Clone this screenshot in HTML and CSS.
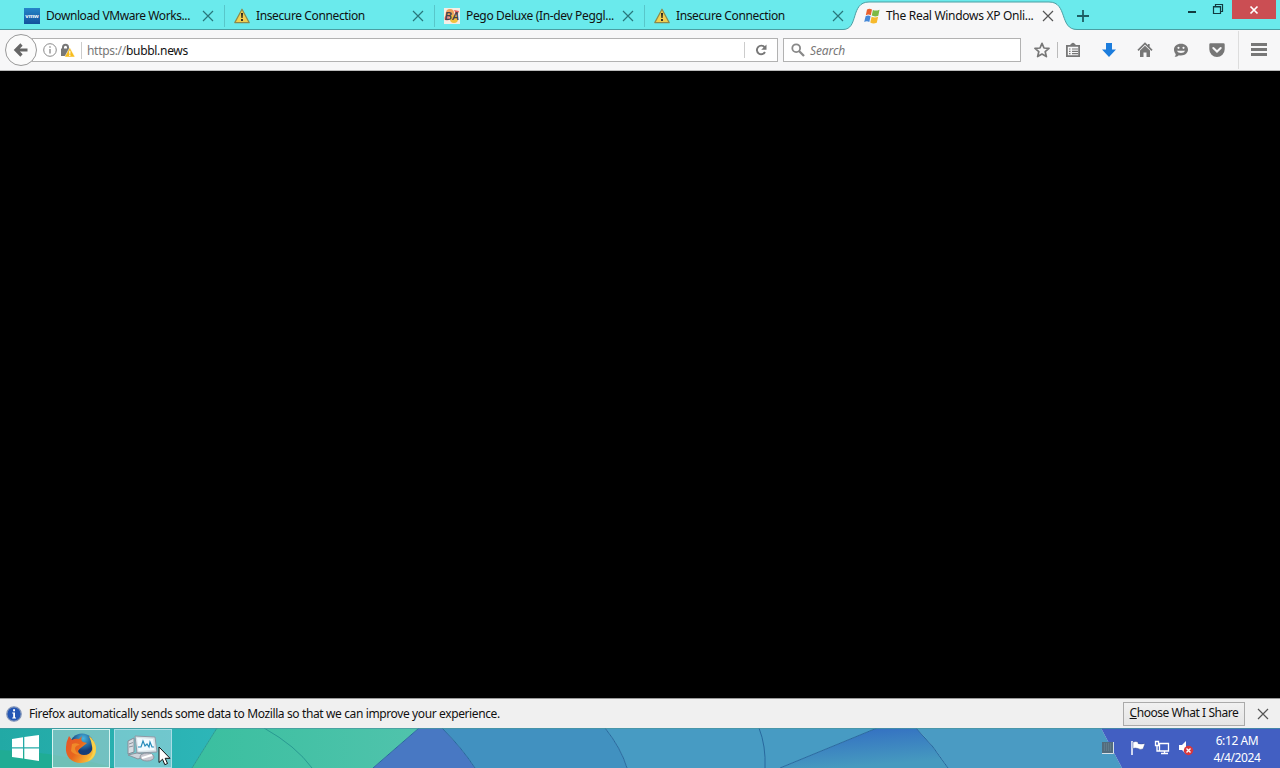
FILE: index.html
```html
<!DOCTYPE html>
<html lang="en">
<head>
    <meta charset="UTF-8">
    <title>The Real Windows XP Online</title>
    <link rel="stylesheet" href="styles.css">
</head>
<body>
    <svg class="defs" width="0" height="0">
        <symbol id="cross" viewBox="0 0 12 12"><path d="M1 1L11 11M11 1L1 11" fill="none" stroke="currentColor" stroke-width="1.2"/></symbol>
        <symbol id="warning" viewBox="0 0 16 16">
            <path d="M8 1.2L15.2 14.6H.8Z" fill="#f0cf50" stroke="#8c8a4c" stroke-width="1.2" stroke-linejoin="round"/>
            <path d="M7 5h2l-.4 5H7.4zM7.1 11h1.8v2H7.1z" fill="#222"/>
        </symbol>
    </svg>
    <div id="desktop">
        <div id="tabs">
            <div class="tab">
                <svg class="favicon" viewBox="0 0 16 16"><defs><linearGradient id="vm" x2="0" y2="1"><stop stop-color="#2585c8"/><stop offset="1" stop-color="#12519c"/></linearGradient></defs><path d="M0 0h16v16H0z" fill="url(#vm)"/><text x="8" y="10" text-anchor="middle" class="vmw">vmw</text></svg>
                <span class="title t1">Download VMware Works...</span>
                <svg class="close"><use href="#cross"/></svg>
            </div>
            <div class="tab">
                <svg class="favicon"><use href="#warning"/></svg>
                <span class="title t2">Insecure Connection</span>
                <svg class="close"><use href="#cross"/></svg>
            </div>
            <div class="tab">
                <svg class="favicon" viewBox="0 0 16 16"><path d="M0 0h16v16H0z" fill="#f5eee6"/><circle cx="6" cy="5" r="4" fill="#f0a05a"/><circle cx="10" cy="11" r="4" fill="#f5c23c"/><circle cx="3" cy="10" r="2.5" fill="#e88"/><path d="M10 2l5 1-2 5z" fill="#e4605a"/><text x="8" y="12" text-anchor="middle" class="ba">BA</text></svg>
                <span class="title t3">Pego Deluxe (In-dev Peggl...</span>
                <svg class="close"><use href="#cross"/></svg>
            </div>
            <div class="tab last">
                <svg class="favicon"><use href="#warning"/></svg>
                <span class="title t2">Insecure Connection</span>
                <svg class="close"><use href="#cross"/></svg>
            </div>
            <div class="tab active">
                <svg class="shape" viewBox="0 0 240 31"><path d="M0 29.5C16 29.5 7 2 26 2H206C225 2 216 29.500 234 29.500V31H0Z" fill="#f7f7f8"/><path d="M0 29.5C16 29.5 7 2 26 2H206C225 2 216 29.500 234 29.500" fill="none" stroke="#4a9fa3"/></svg>
                <svg class="favicon" viewBox="0 0 16 16"><path d="M3 1.5C5 .3 6 .5 8 1.4L6.8 7.2C5 6.3 3.6 6.4 1.8 7.3Z" fill="#e8602c"/><path d="M8.9 1.9c2 1 4 .9 6.6-.2l-1.2 6c-2.4 1-4.4.9-6.5-.1Z" fill="#7db944"/><path d="M1.6 8.3c1.8-1 3.2-1 5-.1L5.3 14C3.6 13 2 13 .2 14Z" fill="#4488d8"/><path d="M7.6 8.7c2.1 1 4 1.1 6.5.1l-1.3 6c-2.6 1-4.5.9-6.5-.2Z" fill="#f6b92c"/></svg>
                <span class="title t4">The Real Windows XP Onli...</span>
                <svg class="close"><use href="#cross"/></svg>
            </div>
            <svg class="plus" viewBox="0 0 12 12"><path d="M6 0v12M0 6h12" stroke="#1d5e63" stroke-width="1.8"/></svg>
            <div class="window-buttons">
                <svg width="44" height="19" viewBox="0 0 44 19"><path d="M0 11h8v2H0z" fill="#123b40"/><path d="M25.5 6.500h7v7h-7zM27.500 6V4.500h7v7H33M25 7h8" fill="none" stroke="#123b40" stroke-width="1.2"/></svg>
                <div class="window-close"><svg viewBox="0 0 12 12"><path d="M2.500 2.500l7 7m0-7l-7 7" stroke="#fff" stroke-width="1.7"/></svg></div>
            </div>
        </div>
        <div id="toolbar">
            <div class="back"><svg viewBox="0 0 16 16"><path d="M14.500 8H3M8.500 2.500L3 8l5.500 5.500" fill="none" stroke="#666" stroke-width="3.200"/></svg></div>
            <div class="urlbar">
                <svg class="info" viewBox="0 0 14 14"><circle cx="7" cy="7" r="6.300" fill="none" stroke="#8b8b8b"/><path d="M7 6v4.500M7 3.300v1.500" stroke="#888" stroke-width="1.300"/></svg>
                <svg class="lock" viewBox="0 0 15 15"><path d="M3 7V4.200a2.500 2.500 0 0 1 5 0V7" fill="none" stroke="#777" stroke-width="2"/><path d="M1 5.500h9v7.500H1z" fill="#777"/><path d="M9.800 4.500L15 14H4.600Z" fill="#f8bd1c" stroke="#fff" stroke-width=".5"/><path d="M9.800 7.800v3m0 .8v1.300" stroke="#fff" stroke-width="1.200"/></svg>
                <span class="address"><span class="scheme">https://</span>bubbl.news</span>
                <div class="reload"><svg viewBox="0 0 12 12"><path d="M9.500 3.200A4.300 4.300 0 1 0 10 8" fill="none" stroke="#777" stroke-width="1.900"/><path d="M11.500.5v5.300H6.200z" fill="#777"/></svg></div>
            </div>
            <div class="search">
                <svg viewBox="0 0 14 14"><circle cx="5.200" cy="5.200" r="3.900" fill="none" stroke="#888" stroke-width="1.800"/><path d="M8 8l5 5" stroke="#888" stroke-width="2.300"/></svg>
                <span>Search</span>
            </div>
            <div class="tool star"><svg viewBox="0 0 16 16"><path d="M8 1.300l2 4.700 5 .4-3.800 3.300 1.200 4.900L8 12l-4.400 2.600 1.200-4.900L1 6.400 6 6z" fill="none" stroke="#777" stroke-width="1.700" stroke-linejoin="round"/></svg></div>
            <div class="tool list"><svg viewBox="0 0 16 16"><path d="M1.900 3.800h12.200v10.400H1.900z" fill="none" stroke="#777" stroke-width="1.800" /><path d="M5 3l1.500-1.400Q8-.2 9.500 1.600L11 3z" fill="#777"/><path d="M4 7h1.500M7 7h6M4 9.300h1.500M7 9.300h6M4 11.600h1.500M7 11.600h6" stroke="#777" stroke-width="1.200"/></svg></div>
            <div class="tool"><svg viewBox="0 0 16 16"><path d="M5 1h6v6.500h4L8 15 1 7.500h4z" fill="#1c7ddd"/></svg></div>
            <div class="tool"><svg viewBox="0 0 16 16"><path d="M1 8.300L8 1.500l7 6.800M11.800 2v3.500" fill="none" stroke="#777" stroke-width="1.700"/><path d="M3 8.500l5-4.800 5 4.800V15H9.500v-4.500h-3V15H3z" fill="#777"/></svg></div>
            <div class="tool"><svg viewBox="0 0 16 16"><path d="M8 1.800c4.200 0 7 2.500 7 5.800s-2.800 5.900-7 5.900c-.8 0-1.500-.1-2.200-.3-1.100 1-2.500 1.700-4.300 1.600.9-.9 1.300-1.700 1.200-2.900C1.500 10.800 1 9.300 1 7.600c0-3.300 2.800-5.800 7-5.800z" fill="#777"/><circle cx="5.500" cy="5.800" r="1.100" fill="#f7f7f8"/><circle cx="10.500" cy="5.800" r="1.100" fill="#f7f7f8"/><path d="M3.800 8.700h8.400q-1.200 2.300-4.200 2.300t-4.200-2.300z" fill="#f7f7f8"/></svg></div>
            <div class="tool"><svg viewBox="0 0 16 16"><path d="M1.500 1.300h13q1.200 0 1.200 1.200v4.700a7.700 7.700 0 0 1-15.400 0V2.500q0-1.200 1.200-1.200z" fill="#777"/><path d="M4.300 6L8 9.500 11.700 6" fill="none" stroke="#f7f7f8" stroke-width="2" stroke-linecap="round"/></svg></div>
            <div class="tool menu"><svg viewBox="0 0 16 16"><path d="M0 2.500h16M0 7.500h16M0 12.500h16" stroke="#777" stroke-width="2.800"/></svg></div>
        </div>
        <div id="page"></div>
        <div id="infobar">
            <svg class="info-icon" viewBox="0 0 16 16"><circle cx="8" cy="8" r="7.200" fill="#2456b4" stroke="#8295b8" stroke-width="1.300"/><path d="M6.200 6.500H9v5h1v1H6.200v-1h1v-4h-1zM7.100 3.200H9v2H7.100z" fill="#fff"/></svg>
            <span class="message">Firefox automatically sends some data to Mozilla so that we can improve your experience.</span>
            <div class="choose"><span><u>C</u>hoose What I Share</span></div>
            <svg class="close"><use href="#cross"/></svg>
        </div>
        <div id="taskbar">
            <svg class="wallpaper" viewBox="0 0 1280 40">
                <defs>
                    <linearGradient id="teal"><stop stop-color="#22a9a5"/><stop offset="1" stop-color="#2db6b8"/></linearGradient>
                    <linearGradient id="green"><stop stop-color="#3abf9f"/><stop offset="1" stop-color="#50c3ac"/></linearGradient>
                    <linearGradient id="fold" x2=".3" y2="1"><stop stop-color="#316ac3"/><stop offset="1" stop-color="#469abf"/></linearGradient>
                </defs>
                <path d="M0 0h217l-25 40H0z" fill="url(#teal)"/>
                <path d="M0 22Q60 24 115 40H0z" fill="#20ac94"/>
                <path d="M217 0h202l-46 40H192z" fill="url(#green)"/>
                <path d="M419 0h23q20 20 33 40H373z" fill="#4878c3"/>
                <path d="M442 0h163q16 20 22 40H475Q462 20 442 0z" fill="#4191c0"/>
                <path d="M605 0h272L780 40H627Q621 20 605 0z" fill="#479bc3"/>
                <path d="M877 0h39q18 18 32 40H780z" fill="url(#fold)"/>
                <path d="M916 0h185l21 40H948Q934 18 916 0z" fill="#4a9bc3"/>
                <path d="M1101 0h179v40H1122z" fill="#425fc2"/>
                <path d="M217 0l-25 40M264 0q32 18 48 40" fill="none" stroke="#299a92"/>
                <path d="M419 0l-46 40M442 0q20 20 33 40M605 0q16 20 22 40M759 0q7 18 6 40M877 0L780 40M916 0q18 18 32 40" fill="none" stroke="#28699e"/>
                <path d="M0 .5h1280" stroke="#4a969e" stroke-opacity=".7"/>
            </svg>
            <div class="start"><svg viewBox="0 0 27 26"><path d="M0 4l11-1.700v10H0zM12.300 2L27 0v12.300H12.300zM0 13.500h11v10L0 22zM12.300 13.500H27V26l-14.700-2.200z" fill="#fff"/></svg></div>
            <div class="task">
                <svg viewBox="0 0 32 32">
                    <defs><radialGradient id="globe" cx=".55" cy=".2"><stop stop-color="#47b5df"/><stop offset="1" stop-color="#143c78"/></radialGradient><linearGradient id="fox" x2="1" y2=".6"><stop stop-color="#e5532b"/><stop offset=".5" stop-color="#e8661d"/><stop offset="1" stop-color="#f8c338"/></linearGradient></defs>
                    <circle cx="17" cy="14" r="12.500" fill="url(#globe)"/>
                    <path d="M4 4l3 4q3-2 7-1l3-3q-2 4 1 6l4 1-5 4q-3 2-4 4 1 4 6 4 6 0 8-5 2-7-3-14 6 5 7 12 0 14-15 15C6 31 0 24 1 15q0-5 3-11z" fill="url(#fox)"/>
                    <path d="M24 4q6 5 7 12 0 10-8 13 7-7 4-15-1-6-3-10z" fill="#f8d24b"/>
                    <path d="M7 12q5-2 8 1-4 0-5 3 0 5 6 7-7 0-10-4z" fill="#f08a29"/>
                </svg>
            </div>
            <div class="task hover">
                <svg viewBox="0 0 32 32">
                    <path d="M1 9l6-3v14l-6 2z" fill="#d8dde2" stroke="#858c98"/><path d="M2 12l4-1.500M2 15l4-1" stroke="#88929d"/>
                    <path d="M8 4l20 1 2 15-20 1z" fill="#d9e3e8" stroke="#8e9aa6"/><path d="M10 6l16 1 1.500 11-16 1z" fill="#f2fbff"/>
                    <path d="M11 15h3l2-6 2 5 2-2 2 3 1-5 2 5h2" fill="none" stroke="#258bba" stroke-width="1.200"/>
                    <path d="M1 23l9-2 10 2-9 4z" fill="#ccd3da" stroke="#89939c"/><ellipse cx="20" cy="25" rx="7" ry="4" fill="#c8c8d0" stroke="#9096a0"/><path d="M15 26l10-3" stroke="#fff" stroke-width="2"/>
                </svg>
            </div>
            <div class="tray">
                <svg class="grid" viewBox="0 0 12 12"><path d="M0 0h12v12H0z" fill="#536c7d"/><path d="M0 11.500h11.500V0" fill="none" stroke="#d6e1e9"/><path d="M2 2h8M2 4h8M2 6h8M2 8h8" stroke="#6e899a" stroke-dasharray="1 1"/></svg>
                <svg class="flag" viewBox="0 0 16 16"><path d="M2 1v14" stroke="#fff" stroke-width="1.500"/><path d="M3 2q3-1 5 0v1.500q3 1 7 0L13 9q-3 1-5-.5Q5 7.500 3 8.500z" fill="#fff" stroke="#253c84" stroke-width=".4"/></svg>
                <svg class="network" viewBox="0 0 16 16"><path d="M5.500 3.500h9v7.500h-9zM7 13.500h7M10.500 11v3M1.500 1.500h3v4h-3zM3 5.500V11h2" fill="none" stroke="#fff" stroke-width="1.300"/></svg>
                <svg class="sound" viewBox="0 0 16 16"><path d="M1 5h3l4-4v13l-4-4H1z" fill="#fff"/><circle cx="10.500" cy="10.500" r="4.700" fill="#d8373d"/><path d="M8.500 8.500l4 4m0-4l-4 4" stroke="#fff" stroke-width="1.400"/></svg>
                <div class="clock"><span class="time">6:12 AM</span><span class="date">4/4/2024</span></div>
            </div>
            <svg class="pointer" viewBox="0 0 13 20"><path d="M1 1v15.500l3.500-3.300 2.300 5.500 2.700-1.200-2.300-5.200h4.800z" fill="#fff" stroke="#111"/></svg>
        </div>
    </div>
</body>
</html>
```

FILE: styles.css
```css
body{
    margin:0;
    font-family: "Noto Sans", "Open Sans", sans-serif;
    font-size:12px;
    color:#111;
    overflow:hidden;
}
svg{
    display:block;
    flex:none;
}
span{
    white-space:nowrap;
}
.defs{
    position:absolute;
}
#desktop{
    display:flex;
    flex-direction:column;
    width:1280px;
    height:768px;
}
/* tab strip */
#tabs{
    display:flex;
    height:30px;
    box-sizing:border-box;
    padding-left:14px;
    background:#6aeaec;
    border-bottom:1px solid #4a9fa3;
}
.tab{
    display:flex;
    align-items:center;
    position:relative;
    width:210px;
    height:32px;
    box-sizing:border-box;
    padding:0 10px;
}
.tab::after{
    content:"";
    position:absolute;
    right:-1px;
    top:5px;
    width:1px;
    height:22px;
    background:#58c6ca;
}
.tab.last::after, .tab.active::after{
    display:none;
}
.favicon{
    width:16px;
    height:16px;
    margin-right:6px;
    position:relative;
}
.vmw{
    font-family:"Liberation Sans", sans-serif;
    font-size:6px;
    font-weight:bold;
    fill:#fff;
}
.ba{
    font-family:"Liberation Sans", sans-serif;
    font-size:10px;
    font-weight:bold;
    font-style:italic;
    fill:#43434d;
}
.title{
    flex:1;
    width:0;
    position:relative;
    line-height:16px;
    padding-bottom:1px;
}
.t1{letter-spacing:-.42px;}
.t2{letter-spacing:-.38px;}
.t3{letter-spacing:-.34px;}
.t4{letter-spacing:-.3px;}
.close{
    width:12px;
    height:12px;
    color:#28777b;
    position:relative;
}
.active .close, #infobar .close{
    color:#555;
}
.shape{
    position:absolute;
    left:-11px;
    top:0;
    width:240px;
    height:31px;
}
.plus{
    width:12px;
    height:12px;
    margin:10px 0 0 13px;
}
.window-buttons{
    display:flex;
    margin-left:auto;
    margin-right:4px;
}
.window-close{
    display:flex;
    align-items:center;
    justify-content:center;
    width:44px;
    height:19px;
    background:#cb4e53;
}
.window-close svg{
    width:12px;
    height:12px;
}
/* navigation */
#toolbar{
    display:flex;
    align-items:center;
    height:41px;
    box-sizing:border-box;
    border-bottom:1px solid #bbb;
    background:#f7f7f8;
    padding-left:5px;
}
.back{
    display:flex;
    align-items:center;
    justify-content:center;
    width:32px;
    height:32px;
    box-sizing:border-box;
    border:1px solid #999;
    border-radius:50%;
    background:#fbfbfb;
    position:relative;
    z-index:1;
}
.back svg{
    width:16px;
    height:16px;
}
.urlbar{
    display:flex;
    align-items:center;
    width:746px;
    height:24px;
    box-sizing:border-box;
    margin-left:-5px;
    border:1px solid #b2b2b2;
    background:#fff;
    padding-left:10px;
}
.info{
    width:14px;
    height:14px;
}
.lock{
    width:15px;
    height:15px;
    margin-left:3px;
}
.address{
    flex:1;
    margin-left:6px;
    padding-left:5px;
    border-left:1px solid #ccc;
    letter-spacing:-.3px;
}
.scheme{
    color:#777;
}
.reload{
    display:flex;
    align-items:center;
    justify-content:center;
    width:32px;
    height:16px;
    border-left:1px solid #ccc;
}
.reload svg{
    width:12px;
    height:12px;
}
.search{
    display:flex;
    align-items:center;
    width:238px;
    height:24px;
    box-sizing:border-box;
    margin:0 6px 0 5px;
    border:1px solid #b2b2b2;
    background:#fff;
    padding-left:7px;
    color:#777;
    font-style:italic;
    letter-spacing:-.1px;
}
.search svg{
    width:14px;
    height:14px;
    margin-right:5px;
}
.tool{
    display:flex;
    align-items:center;
    justify-content:center;
    width:36px;
}
.tool svg{
    width:16px;
    height:16px;
}
.star{
    width:30px;
    border-right:1px solid #bbb;
}
.list{
    width:30px;
    margin-right:3px;
}
.menu{
    width:40px;
    height:38px;
    margin-left:3px;
    border-left:1px solid #ddd;
}
#page{
    flex:1;
    background:#000;
}
#infobar{
    display:flex;
    align-items:center;
    height:30px;
    box-sizing:border-box;
    border-top:1px solid #999;
    background:#f0f0f0;
    padding:0 11px 0 6px;
}
.info-icon{
    width:16px;
    height:16px;
    margin-right:7px;
}
.message{
    letter-spacing:-.38px;
    padding-bottom:1px;
}
.choose{
    display:flex;
    align-items:center;
    justify-content:center;
    width:122px;
    height:24px;
    box-sizing:border-box;
    margin:0 12px 0 auto;
    padding-bottom:2px;
    border:1px solid #aaa;
    background:linear-gradient(#f1f1f1,#e5e5e5);
    letter-spacing:-.45px;
}
/* windows taskbar */
#taskbar{
    display:flex;
    align-items:center;
    position:relative;
    height:40px;
}
.wallpaper{
    position:absolute;
    left:0;
    top:0;
    width:1280px;
    height:40px;
}
.start{
    width:27px;
    margin:0 13px 0 12px;
    position:relative;
}
.task{
    display:flex;
    align-items:center;
    justify-content:center;
    width:58px;
    height:39px;
    box-sizing:border-box;
    margin-right:4px;
    border:1px solid #d5f3f0;
    background:rgba(165,205,205,.6);
    position:relative;
}
.task svg{
    width:32px;
    height:32px;
}
.hover{
    border-color:#a9dce5;
    background:rgba(150,210,220,.65);
}
.tray{
    display:flex;
    align-items:center;
    margin-left:auto;
    position:relative;
    color:#fff;
}
.grid{
    width:12px;
    height:12px;
}
.flag{
    width:16px;
    height:16px;
    margin-left:16px;
}
.network{
    width:16px;
    height:16px;
    margin-left:8px;
}
.sound{
    width:16px;
    height:16px;
    margin-left:8px;
}
.clock{
    display:flex;
    flex-direction:column;
    align-items:center;
    width:86px;
    padding-top:2px;
    line-height:17px;
    letter-spacing:-.4px;
}
.pointer{
    position:absolute;
    left:158px;
    top:18px;
    width:13px;
    height:20px;
}
```
